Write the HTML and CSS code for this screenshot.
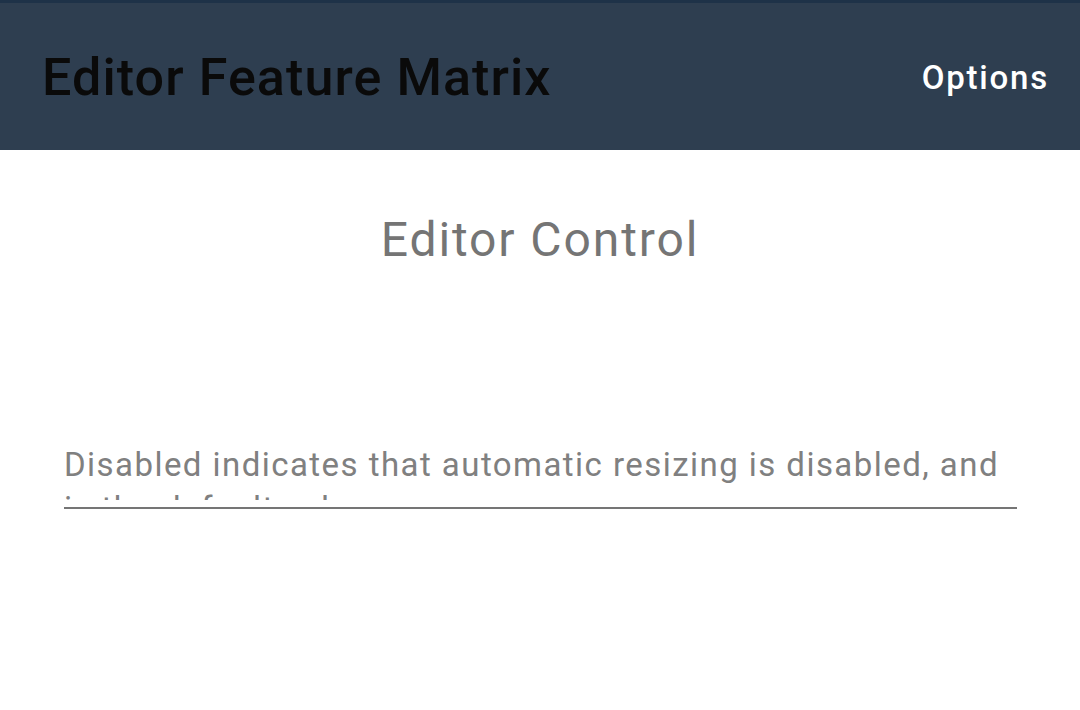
FILE: index.html
```html
<!DOCTYPE html>
<html>
<head>
<meta charset="utf-8">
<link rel="stylesheet" href="styles.css">
</head>
<body>
<div class="statusbar"></div>
<header class="appbar">
  <h1 class="title">Editor Feature Matrix</h1>
  <span class="action">Options</span>
</header>
<main class="content">
  <h2 class="heading">Editor Control</h2>
  <div class="field">
    <div class="field-text">Disabled indicates that automatic resizing is disabled, and is the default value.</div>
  </div>
</main>
</body>
</html>
```
FILE: styles.css
```css
html, body {
  margin: 0;
  padding: 0;
  background: #ffffff;
  font-family: Roboto, "Noto Sans", sans-serif;
}
.statusbar {
  height: 3px;
  background: #1e3248;
}
.appbar {
  height: 147px;
  background: #2e3e50;
  display: flex;
  align-items: center;
  justify-content: space-between;
  padding: 0 31px 0 42px;
}
.title {
  margin: 3px 0 0;
  font-size: 52px;
  font-weight: 500;
  letter-spacing: 1.1px;
  color: #0a0a0a;
  line-height: 1;
}
.action {
  margin-top: 2px;
  font-size: 33px;
  font-weight: 500;
  letter-spacing: 1.8px;
  color: #ffffff;
  line-height: 1;
}
.content {
  display: flex;
  flex-direction: column;
  align-items: center;
}
.heading {
  margin: 60px 0 0;
  font-size: 48px;
  font-weight: 400;
  letter-spacing: 1.9px;
  color: #757575;
  line-height: 60px;
}
.field {
  align-self: stretch;
  margin: 173px 63px 0 64px;
  padding-bottom: 7px;
  border-bottom: 2px solid #757575;
}
.field-text {
  height: 57px;
  overflow: hidden;
  font-size: 33px;
  letter-spacing: 1.45px;
  line-height: 44px;
  color: #808080;
}
```
